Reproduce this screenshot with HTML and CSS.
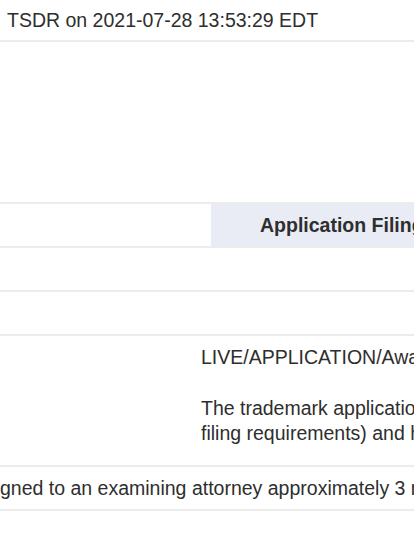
FILE: index.html
```html
<!DOCTYPE html>
<html lang="en">
<head>
  <meta charset="UTF-8" />
  <meta name="viewport" content="width=device-width, initial-scale=1.0" />
  <title>TSDR Status</title>
  <link rel="stylesheet" href="styles.css">
</head>
<body>
  <div class="page">
    <div class="generated">TSDR on 2021-07-28 13:53:29 EDT</div>

    <div class="spacer"></div>

    <div class="row head-row">
      <div class="cell label"></div>
      <div class="cell heading">Application Filing Date</div>
    </div>
    <div class="row empty-row"></div>
    <div class="row empty-row"></div>

    <div class="row status-row">
      <div class="cell label"></div>
      <div class="cell status">
        <p>LIVE/APPLICATION/Awaiting Examination</p>
        <p>The trademark application has been accepted by the Office (has met the minimum<br>filing requirements) and has not yet been assigned to an examining attorney.</p>
      </div>
    </div>

    <div class="row note-row">
      <div class="note">gned to an examining attorney approximately 3 months after filing date.</div>
    </div>
  </div>
</body>
</html>
```

FILE: styles.css
```css
/* Reset and base styles */
* { margin: 0; padding: 0; box-sizing: border-box; }
html, body { overflow: hidden; background: #fff; }
body { font-family: 'Liberation Sans', Arial, sans-serif; font-size: 19.5px; color: #2e2e2e; line-height: 25px; }

.page { width: 960px; }

/* Header line */
.generated { padding: 8px 0 8px 7px; height: 42px; border-bottom: 2px solid #ececec; }
.spacer { height: 160px; }

/* Table rows */
.row { display: flex; border-top: 2px solid #ececec; }
.cell.label { width: 211px; flex-shrink: 0; }

.head-row { height: 44px; }
.heading { flex: 1; background: #e9ebf5; font-weight: bold; padding: 9px 0 0 49px; }

.empty-row { height: 44px; }

.status-row { height: 131px; }
.status-row .label { width: 201px; }
.status { padding-top: 9px; }
.status p { margin-bottom: 26px; }
.status p + p { margin-bottom: 0; }

.note-row { height: 46px; border-bottom: 2px solid #ececec; }
.note { padding: 9px 0 0 0; white-space: nowrap; }
```
